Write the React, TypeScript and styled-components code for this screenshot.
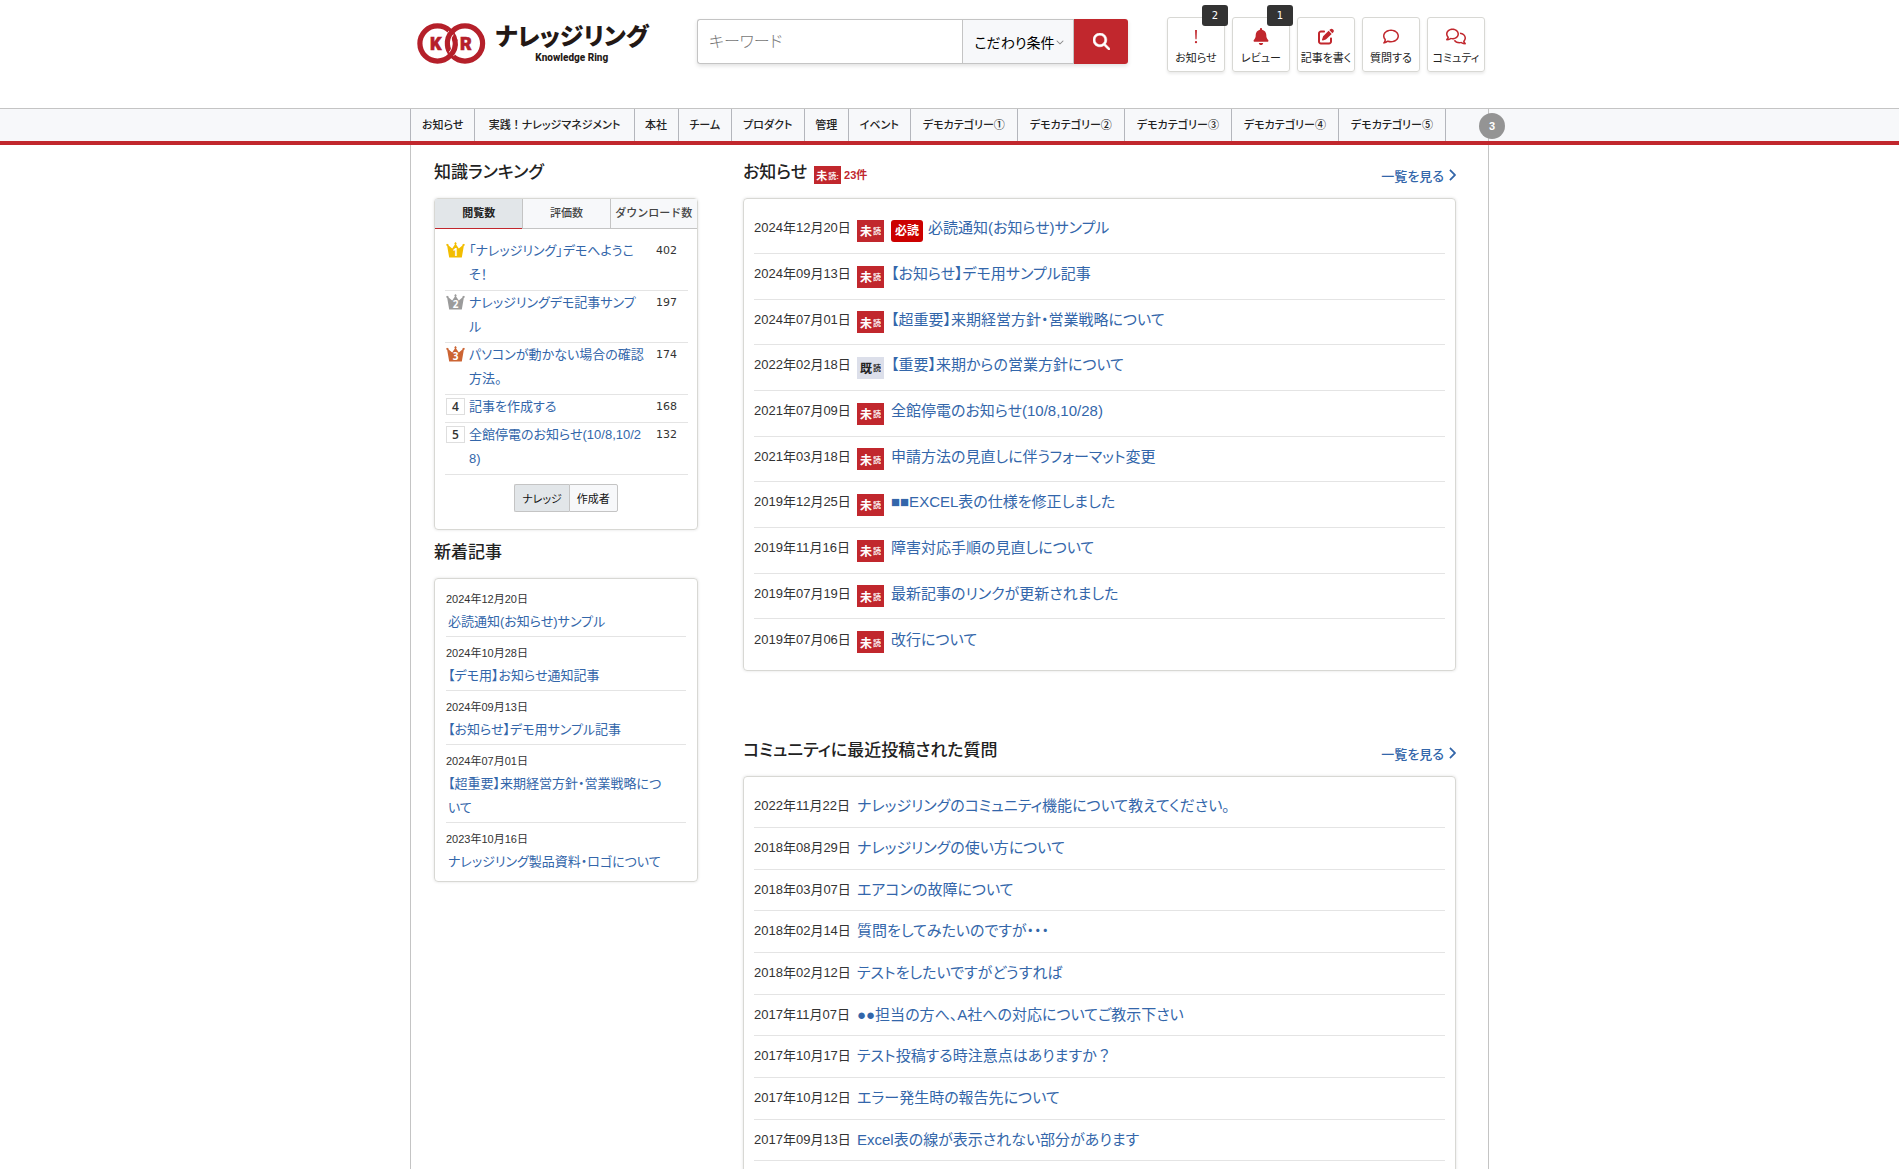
import React, { useState } from "react";
import styled, { createGlobalStyle, css } from "styled-components";
import {
  FaBell,
  FaChevronDown,
  FaChevronRight,
  FaMagnifyingGlass,
  FaPenToSquare,
  FaRegComment,
  FaRegComments,
} from "react-icons/fa6";

const color = {
  red: "#c1272d",
  link: "#3366aa",
  text: "#333333",
  line: "#c4c4c4",
  boxLine: "#d8d8d4",
  rowLine: "#e4e4e4",
  pale: "#f7f8fa",
  active: "#e2e6e9",
};

const GlobalStyle = createGlobalStyle`
  *, *::before, *::after { box-sizing: border-box; }
  body {
    margin: 0;
    background: #fff;
    color: ${color.text};
    font-family: "Liberation Sans", "Noto Sans CJK JP", sans-serif;
    font-feature-settings: "palt";
    font-size: 13px;
  }
  button, input { font: inherit; font-feature-settings: inherit; color: inherit; }
  a { color: ${color.link}; text-decoration: none; }
  a:hover { text-decoration: underline; }
  ul { list-style: none; margin: 0; padding: 0; }
`;

const Page = styled.div`
  display: flex;
  flex-direction: column;
  height: 100vh;
  overflow: hidden;
`;

const container = css`
  width: 100%;
  max-width: 1079px;
  margin: 0 auto;
`;

const Header = styled.header`
  ${container}
  display: flex;
  flex: none;
  align-items: flex-start;
  height: 108px;
  padding: 17px 4px 0 7px;
`;

const Logo = styled.a`
  display: flex;
  flex: none;
  width: 280px;
  padding-top: 6px;
  color: #231815;
  &:hover { text-decoration: none; }
`;

const LogoName = styled.span`
  display: flex;
  flex-direction: column;
  align-items: center;
  margin-left: 9px;
  font-family: "Noto Sans CJK JP", sans-serif;
  font-weight: 900;
  font-size: 24px;
  line-height: 24px;
  white-space: nowrap;
`;

const LogoSub = styled.span`
  font-family: Roboto, sans-serif;
  font-weight: 800;
  font-size: 10px;
  line-height: 21px;
`;

const Search = styled.form`
  display: flex;
  flex: 0 1 431px;
  height: 45px;
  margin-top: 2px;
  border-radius: 3px;
  box-shadow: 0 2px 4px rgba(0, 0, 0, 0.12);
`;

const SearchInput = styled.input`
  flex: 1;
  min-width: 0;
  padding: 0 11px;
  border: 1px solid ${color.line};
  border-right: 0;
  border-radius: 3px 0 0 3px;
  font-size: 16px;
  outline: none;
  &::placeholder { color: #777; font-weight: 300; opacity: 1; }
`;

const SearchOption = styled.button`
  display: flex;
  align-items: center;
  justify-content: center;
  gap: 1px;
  width: 112px;
  padding: 0 0 0 2px;
  border: 1px solid ${color.line};
  background: ${color.pale};
  color: #000;
  font-size: 14px;
  svg { width: 8px; height: 8px; color: #888; }
`;

const SearchSubmit = styled.button`
  display: grid;
  place-items: center;
  width: 54px;
  padding: 0;
  border: 0;
  border-radius: 0 3px 3px 0;
  background: ${color.red};
  color: #fff;
  svg { width: 17px; height: 17px; stroke: currentColor; stroke-width: 16px; }
`;

const QuickLinks = styled.nav`
  display: flex;
  gap: 7px;
  margin-left: auto;
`;

const QuickLink = styled.a`
  position: relative;
  display: flex;
  flex-direction: column;
  align-items: center;
  width: 58px;
  height: 55px;
  padding-top: 10px;
  border: 1px solid ${color.boxLine};
  border-radius: 3px;
  box-shadow: 0 2px 3px rgba(0, 0, 0, 0.08);
  color: #222;
  font-size: 11px;
  line-height: 26px;
  white-space: nowrap;
  svg { height: 18px; color: ${color.red}; }
`;

const QuickBadge = styled.span`
  position: absolute;
  top: -13px;
  right: -4px;
  width: 26px;
  border-radius: 3px;
  background: #333;
  color: #fff;
  font-family: "DejaVu Sans", sans-serif;
  font-size: 10px;
  line-height: 21px;
  text-align: center;
`;

const CategoryBar = styled.nav`
  flex: none;
  border-top: 1px solid ${color.line};
  border-bottom: 4px solid ${color.red};
  background: ${color.pale};
`;

const CategoryInner = styled.div`
  ${container}
  position: relative;
  border-right: 1px solid ${color.line};
`;

const CategoryList = styled.ul`
  display: flex;
  margin-right: 42px;
  border-left: 1px solid #b4b6bc;
`;

const Category = styled.li<{ $grow: number }>`
  flex: ${(p) => p.$grow} 0 auto;
  border-right: 1px solid #b4b6bc;
  a {
    display: block;
    padding: 0 10px;
    color: #222;
    font-size: 11px;
    font-weight: 500;
    line-height: 32px;
    text-align: center;
    white-space: nowrap;
  }
`;

const MoreBadge = styled.span`
  position: absolute;
  top: 4px;
  right: -17px;
  width: 26px;
  border-radius: 50%;
  background: #949494;
  color: #fff;
  font-size: 11px;
  font-weight: 700;
  line-height: 26px;
  text-align: center;
`;

const Main = styled.main`
  ${container}
  display: flex;
  flex: 1;
  align-items: flex-start;
  gap: 45px;
  min-height: 0;
  padding: 13px 32px 0 23px;
  border: solid ${color.line};
  border-width: 0 1px;
`;

const Side = styled.aside`
  flex: none;
  width: 264px;
`;

const Content = styled.div`
  flex: 1;
  min-width: 0;
`;

const Section = styled.section<{ $gap?: number }>`
  margin-bottom: ${(p) => p.$gap ?? 0}px;
`;

const SectionHead = styled.div`
  display: flex;
  align-items: center;
  height: 40px;
  padding-bottom: 10px;
`;

const Heading = styled.h2`
  margin: 0;
  color: #222;
  font-size: 17px;
  font-weight: 500;
  line-height: 28px;
`;

const MoreLink = styled.a`
  display: flex;
  align-items: center;
  gap: 4px;
  margin: 4px 0 0 auto;
  font-weight: 500;
  svg { width: 8px; height: 12px; stroke: currentColor; stroke-width: 20px; }
`;

const Box = styled.div<{ $pad?: string }>`
  padding: ${(p) => p.$pad ?? "0"};
  border: 1px solid ${color.boxLine};
  border-radius: 4px;
  box-shadow: 0 0 3px rgba(0, 0, 0, 0.12);
`;

const Tabs = styled.div`
  display: grid;
  grid-template-columns: 1fr 1fr 1fr;
`;

const Tab = styled.button<{ $active: boolean }>`
  height: 30px;
  padding: 0 0 4px;
  border: solid ${color.line};
  border-width: 0 0 1px 1px;
  background: ${(p) => (p.$active ? color.active : color.pale)};
  border-bottom-color: ${(p) => (p.$active ? color.red : color.line)};
  font-size: 11px;
  font-weight: ${(p) => (p.$active ? 700 : 500)};
  font-feature-settings: normal;
  white-space: nowrap;
  color: ${(p) => (p.$active ? "#222" : "#444")};
  &:first-child { border-left: 0; }
`;

const RankList = styled.ol`
  margin: 0;
  padding: 10px 9px 9px 10px;
  list-style: none;
`;

const RankRow = styled.li`
  display: grid;
  grid-template-columns: 24px 177px auto;
  padding-bottom: 3px;
  border-bottom: 1px solid ${color.rowLine};
  line-height: 24px;
  a { word-break: break-all; }
`;

const Crown = styled.svg`
  width: 19px;
  height: 16px;
  margin: 3px 0 0 1px;
  text {
    font: 700 10px "Open Sans", sans-serif;
    fill: #fff;
    text-anchor: middle;
  }
`;

const RankNumber = styled.span`
  width: 19px;
  height: 17px;
  margin: 3px 0 0 1px;
  border: 1px solid #dedede;
  font-family: "Open Sans", sans-serif;
  font-size: 12px;
  font-weight: 600;
  line-height: 15px;
  text-align: center;
`;

const Count = styled.span`
  margin-left: 10px;
  font-family: "DejaVu Sans", sans-serif;
  font-size: 11px;
`;

const Toggle = styled.div`
  display: flex;
  justify-content: center;
  padding-bottom: 17px;
`;

const ToggleButton = styled.button<{ $active: boolean }>`
  height: 28px;
  padding: 0 7px;
  border: 1px solid ${color.line};
  border-radius: 0 2px 2px 0;
  background: ${(p) => (p.$active ? color.active : color.pale)};
  color: #111;
  font-size: 11px;
  &:first-child { border-right: 0; border-radius: 2px 0 0 2px; }
`;

const NewItem = styled.li`
  padding: 5px 0 2px;
  border-bottom: 1px solid ${color.rowLine};
  font-size: 11px;
  line-height: 22px;
  &:last-child { border-bottom: 0; }
  a {
    display: block;
    padding: 0 20px 0 2px;
    font-size: 13px;
    line-height: 24px;
    word-break: break-all;
  }
`;

const FeedRow = styled.li<{ $height: number; $shift: number }>`
  display: flex;
  align-items: center;
  height: ${(p) => p.$height}px;
  padding-bottom: ${(p) => p.$shift}px;
  border-bottom: 1px solid ${color.rowLine};
  font-size: 13px;
  white-space: nowrap;
  &:nth-child(3n) { height: ${(p) => p.$height - 1}px; }
  a { font-size: 15px; }
`;

const NoticeRow = styled(FeedRow)`
  &:last-child { border-bottom: 0; }
`;

const FeedDate = styled.time`
  width: 103px;
`;

const Mark = styled.span<{ $read?: boolean; $small?: boolean }>`
  display: flex;
  align-items: center;
  justify-content: center;
  gap: 1px;
  width: 27px;
  height: ${(p) => (p.$small ? 18 : 22)}px;
  margin: ${(p) => (p.$small ? "4px 3px 0 7px" : "8px 7px 0 0")};
  background: ${(p) => (p.$read ? "#dcdfea" : color.red)};
  color: ${(p) => (p.$read ? "#222" : "#fff")};
  font-size: ${(p) => (p.$small ? 11 : 12)}px;
  font-weight: 700;
  small { font-size: 8px; opacity: 0.9; }
`;

const MustRead = styled.span`
  width: 32px;
  margin: 8px 5px 0 0;
  border-radius: 3px;
  background: #c00;
  color: #fff;
  font-size: 12px;
  font-weight: 700;
  line-height: 22px;
  text-align: center;
`;

const UnreadCount = styled.span`
  margin-top: 2px;
  color: ${color.red};
  font-size: 11px;
  font-weight: 700;
`;

const FullWidth = styled.span`
  font-feature-settings: normal;
`;

const categories = [
  "お知らせ", "実践！ナレッジマネジメント", "本社", "チーム", "プロダクト", "管理", "イベント",
  "デモカテゴリー①", "デモカテゴリー②", "デモカテゴリー③", "デモカテゴリー④", "デモカテゴリー⑤",
];

const ranking = [
  { title: "「ナレッジリング」デモへようこそ！", count: 402, crown: "#f2bd00" },
  { title: "ナレッジリングデモ記事サンプル", count: 197, crown: "#9b9b9b" },
  { title: "パソコンが動かない場合の確認方法。", count: 174, crown: "#cc6433" },
  { title: "記事を作成する", count: 168 },
  { title: "全館停電のお知らせ(10/8,10/28)", count: 132 },
];

const newArticles = [
  ["2024年12月20日", "必読通知(お知らせ)サンプル"],
  ["2024年10月28日", "【デモ用】お知らせ通知記事"],
  ["2024年09月13日", "【お知らせ】デモ用サンプル記事"],
  ["2024年07月01日", "【超重要】来期経営方針・営業戦略について"],
  ["2023年10月16日", "ナレッジリング製品資料・ロゴについて"],
];

const notices = [
  { date: "2024年12月20日", title: "必読通知(お知らせ)サンプル", must: true },
  { date: "2024年09月13日", title: "【お知らせ】デモ用サンプル記事" },
  { date: "2024年07月01日", title: "【超重要】来期経営方針・営業戦略について" },
  { date: "2022年02月18日", title: "【重要】来期からの営業方針について", read: true },
  { date: "2021年07月09日", title: "全館停電のお知らせ(10/8,10/28)" },
  { date: "2021年03月18日", title: "申請方法の見直しに伴うフォーマット変更" },
  { date: "2019年12月25日", title: "■■EXCEL表の仕様を修正しました" },
  { date: "2019年11月16日", title: "障害対応手順の見直しについて" },
  { date: "2019年07月19日", title: "最新記事のリンクが更新されました" },
  { date: "2019年07月06日", title: "改行について" },
];

const questions = [
  ["2022年11月22日", "ナレッジリングのコミュニティ機能について教えてください。"],
  ["2018年08月29日", "ナレッジリングの使い方について"],
  ["2018年03月07日", "エアコンの故障について"],
  ["2018年02月14日", "質問をしてみたいのですが・・・"],
  ["2018年02月12日", "テストをしたいですがどうすれば"],
  ["2017年11月07日", "●●担当の方へ、A社への対応についてご教示下さい"],
  ["2017年10月17日", "テスト投稿する時注意点はありますか？"],
  ["2017年10月12日", "エラー発生時の報告先について"],
  ["2017年09月13日", "Excel表の線が表示されない部分があります"],
];

const tabNames = ["閲覧数", "評価数", "ダウンロード数"];

// Kana are set proportionally; sentence-ending marks keep their full cell.
function Label({ text }: { text: string }) {
  return (
    <>
      {text.split(/([！？。])/).map((part, i) =>
        i % 2 ? <FullWidth key={i}>{part}</FullWidth> : part
      )}
    </>
  );
}

function RingMark() {
  return (
    <svg width="69" height="41" viewBox="0 0 69 41" aria-hidden="true">
      <g fill="none" strokeWidth="5.2">
        <circle cx="20.5" cy="20.5" r="17.6" stroke="#b5202a" />
        <circle cx="48" cy="20.5" r="17.6" stroke="#b5202a" />
        <path d="M38 18 A17.6 17.6 0 0 1 34.3 31.3" stroke="#fff" strokeWidth="6.4" />
        <path d="M38 17 A17.6 17.6 0 0 1 32.6 33.2" stroke="#b5202a" />
        <path d="M30.5 22 A17.6 17.6 0 0 1 34.2 9.7" stroke="#fff" strokeWidth="6.4" />
        <path d="M30.5 23 A17.6 17.6 0 0 1 35.8 7.8" stroke="#b5202a" />
      </g>
      <g fill="#b5202a" stroke="#b5202a" strokeWidth="0.6" fontFamily="Roboto, sans-serif" fontWeight="900" fontSize="18">
        <text x="13" y="27">K</text>
        <text x="43" y="27">R</text>
      </g>
    </svg>
  );
}

function ExclamationIcon() {
  return (
    <svg width="4" height="18" viewBox="0 0 4 18" fill="currentColor" aria-hidden="true">
      <path d="M1 2 H3 L2.6 12 H1.4 Z" />
      <circle cx="2" cy="15" r="1.2" />
    </svg>
  );
}

function CrownIcon({ fill, rank }: { fill: string; rank: number }) {
  return (
    <Crown viewBox="0 0 19 16" role="img" aria-label={`${rank}位`}>
      <path
        fill={fill}
        d="M3.2 15.6 L1.2 4 L0 3 L1 1.8 L2.6 2.4 L2.6 3.6 L6.2 6.4 L8.9 2.6 L8.3 1.2 L9.5 0 L10.7 1.2 L10.1 2.6 L12.8 6.4 L16.4 3.6 L16.4 2.4 L18 1.8 L19 3 L17.8 4 L15.8 15.6 Z"
      />
      <text x="9.5" y="14">{rank}</text>
    </Crown>
  );
}

export default function App() {
  const [tab, setTab] = useState(0);
  const [mode, setMode] = useState(0);

  return (
    <Page>
      <GlobalStyle />
      <Header>
        <Logo href="#">
          <RingMark />
          <LogoName>
            ナレッジリング
            <LogoSub>Knowledge Ring</LogoSub>
          </LogoName>
        </Logo>
        <Search onSubmit={(e) => e.preventDefault()}>
          <SearchInput type="text" placeholder="キーワード" aria-label="キーワード" />
          <SearchOption type="button">
            こだわり条件
            <FaChevronDown />
          </SearchOption>
          <SearchSubmit type="submit" aria-label="検索">
            <FaMagnifyingGlass />
          </SearchSubmit>
        </Search>
        <QuickLinks>
          <QuickLink href="#"><ExclamationIcon />お知らせ<QuickBadge>2</QuickBadge></QuickLink>
          <QuickLink href="#"><FaBell size={16} />レビュー<QuickBadge>1</QuickBadge></QuickLink>
          <QuickLink href="#"><FaPenToSquare size={16} />記事を書く</QuickLink>
          <QuickLink href="#"><FaRegComment size={16} />質問する</QuickLink>
          <QuickLink href="#"><FaRegComments size={20} />コミュティ</QuickLink>
        </QuickLinks>
      </Header>

      <CategoryBar>
        <CategoryInner>
          <CategoryList>
            {categories.map((name) => (
              <Category key={name} $grow={name.length}>
                <a href="#"><Label text={name} /></a>
              </Category>
            ))}
          </CategoryList>
          <MoreBadge>3</MoreBadge>
        </CategoryInner>
      </CategoryBar>

      <Main>
        <Side>
          <Section $gap={8}>
            <SectionHead><Heading>知識ランキング</Heading></SectionHead>
            <Box>
              <Tabs role="tablist">
                {tabNames.map((name, i) => (
                  <Tab key={name} type="button" role="tab" aria-selected={tab === i} $active={tab === i} onClick={() => setTab(i)}>
                    {name}
                  </Tab>
                ))}
              </Tabs>
              <RankList>
                {ranking.map((item, i) => (
                  <RankRow key={item.title}>
                    {item.crown ? <CrownIcon fill={item.crown} rank={i + 1} /> : <RankNumber>{i + 1}</RankNumber>}
                    <a href="#">{item.title}</a>
                    <Count>{item.count}</Count>
                  </RankRow>
                ))}
              </RankList>
              <Toggle>
                {["ナレッジ", "作成者"].map((name, i) => (
                  <ToggleButton key={name} type="button" aria-pressed={mode === i} $active={mode === i} onClick={() => setMode(i)}>
                    {name}
                  </ToggleButton>
                ))}
              </Toggle>
            </Box>
          </Section>
          <Section>
            <SectionHead><Heading>新着記事</Heading></SectionHead>
            <Box $pad="4px 11px 5px">
              <ul>
                {newArticles.map(([date, title]) => (
                  <NewItem key={date}>
                    <time>{date}</time>
                    <a href="#">{title}</a>
                  </NewItem>
                ))}
              </ul>
            </Box>
          </Section>
        </Side>

        <Content>
          <Section $gap={65}>
            <SectionHead>
              <Heading>お知らせ</Heading>
              <Mark $small>未<small>読:</small></Mark>
              <UnreadCount>23件</UnreadCount>
              <MoreLink href="#">一覧を見る<FaChevronRight /></MoreLink>
            </SectionHead>
            <Box $pad="9px 10px 5px">
              <ul>
                {notices.map((n) => (
                  <NoticeRow key={n.date} $height={46} $shift={8}>
                    <FeedDate>{n.date}</FeedDate>
                    <Mark $read={n.read}>{n.read ? "既" : "未"}<small>読</small></Mark>
                    {n.must && <MustRead>必読</MustRead>}
                    <a href="#">{n.title}</a>
                  </NoticeRow>
                ))}
              </ul>
            </Box>
          </Section>
          <Section>
            <SectionHead>
              <Heading>コミュニティに最近投稿された質問</Heading>
              <MoreLink href="#">一覧を見る<FaChevronRight /></MoreLink>
            </SectionHead>
            <Box $pad="9px 10px 40px">
              <ul>
                {questions.map(([date, title]) => (
                  <FeedRow key={date} $height={42} $shift={4}>
                    <FeedDate>{date}</FeedDate>
                    <a href="#"><Label text={title} /></a>
                  </FeedRow>
                ))}
              </ul>
            </Box>
          </Section>
        </Content>
      </Main>
    </Page>
  );
}
